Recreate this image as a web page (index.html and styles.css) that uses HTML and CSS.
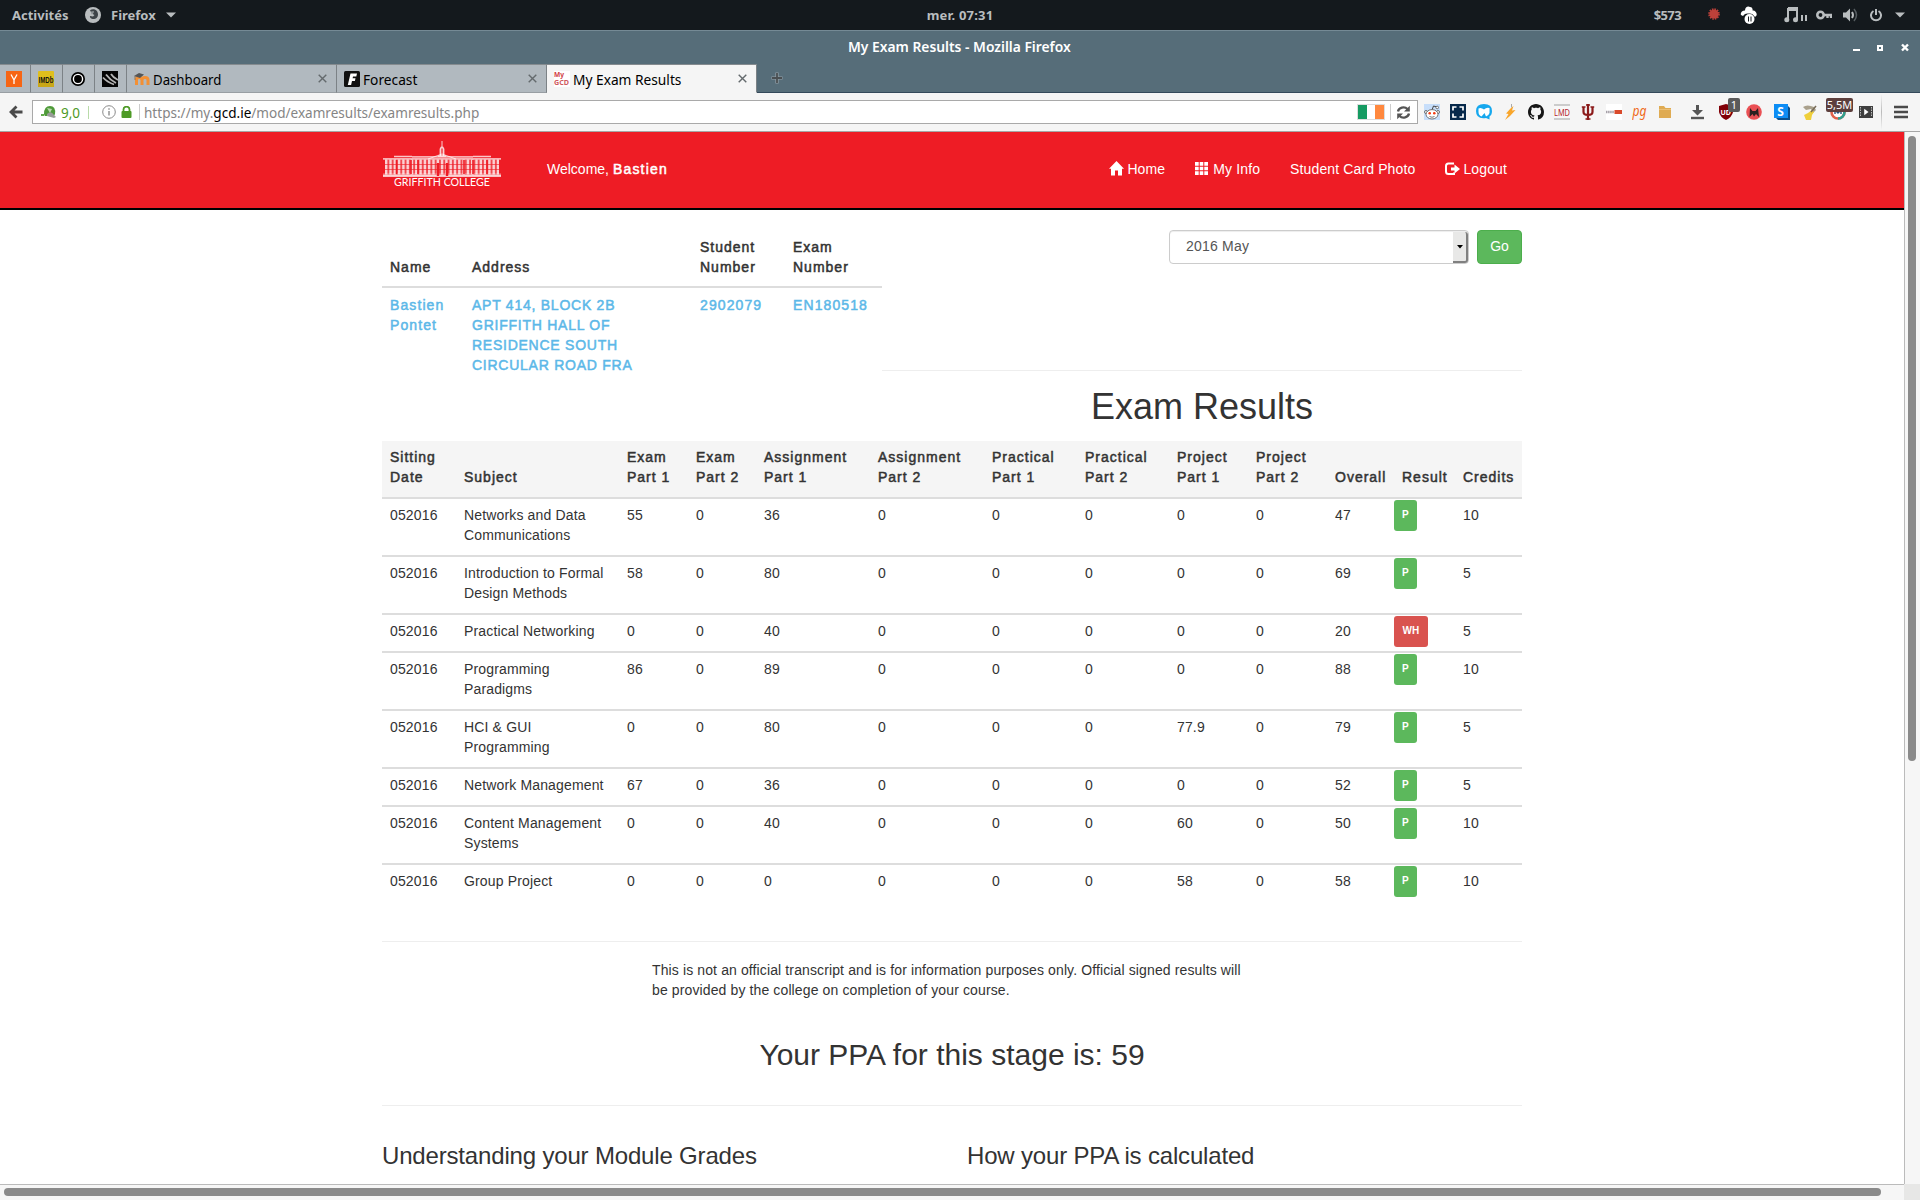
FILE: index.html
```html
<!DOCTYPE html>
<html lang="en">
<head>
<meta charset="utf-8">
<title>My Exam Results</title>
<link rel="stylesheet" href="styles.css">
</head>
<body>
<div class="desktop">
  <div class="panel">
    <div class="panel-left">
      <span class="activities">Activités</span>
      <svg class="fx" width="16" height="16" viewBox="0 0 16 16"><circle cx="8" cy="8" r="8" fill="#b9bdbf"/><path d="M5 3.200C8 1 13 2.500 13 7.500C13 11 10 12.500 7.500 12C5.500 11.500 4.500 10 5 9L8 9.500L9.500 8L7.500 7L8.500 5.500L6 5Z" fill="#3d4348"/><path d="M6 4.500L9 4L8.500 6L6.500 7.500Z" fill="#8b9194"/></svg>
      <span>Firefox</span>
      <svg class="caret" width="10" height="6" viewBox="0 0 10 6"><path d="M0 0.500H10L5 5.500Z" fill="#b9bdbf"/></svg>
    </div>
    <div class="clock">mer. 07:31</div>
    <div class="panel-right">
      <span class="money">$573</span>
      <svg class="i-badge" width="12" height="12" viewBox="0 0 12 12"><circle cx="6" cy="6" r="4.600" fill="#bd413a"/><circle cx="6" cy="6" r="5" fill="none" stroke="#bd413a" stroke-width="1.600" stroke-dasharray="1.600 1"/></svg>
      <svg class="i-mush" width="17" height="18" viewBox="0 0 17 18"><path d="M1 9C0 7 2 4.500 5 4.500C5 1 8-.5 10 1C12 1 13 3 12.500 4.500C15 4 17.500 7 16.500 9.500L15 11C13 8 11 7 9 7.500C5.500 7 4 8.500 3 10Z" fill="#fff"/><circle cx="9.500" cy="13" r="5" fill="#fff"/><path d="M8.500 10.500V15.500M11 10.500V15.500" stroke="#14191d"/></svg>
      <svg class="i-music" width="23" height="16" viewBox="0 0 23 16"><path d="M4 1H13V13M4 1V13" fill="none" stroke="#b9bdbf" stroke-width="2"/><path d="M4 2H13" stroke="#b9bdbf" stroke-width="4"/><circle cx="2.800" cy="12.800" r="2.500" fill="#b9bdbf"/><circle cx="11.500" cy="12.800" r="2.500" fill="#b9bdbf"/><path d="M18 8V14M22 8V14" stroke="#b9bdbf" stroke-width="2"/></svg>
      <svg class="i-key" width="16" height="12" viewBox="0 0 16 12"><circle cx="4.500" cy="6" r="3.200" fill="none" stroke="#b9bdbf" stroke-width="2.600"/><path d="M8 6H15V9M11.500 6V9" fill="none" stroke="#b9bdbf" stroke-width="2.400"/></svg>
      <svg class="i-vol" width="15" height="14" viewBox="0 0 15 14"><path d="M0 4.500H3L7 0.500V13.500L3 9.500H0Z" fill="#b9bdbf"/><path d="M9 4Q11 7 9 10" fill="none" stroke="#b9bdbf" stroke-width="2"/><path d="M11 1Q16 7 11 13" fill="none" stroke="#555c60" stroke-width="1.500"/></svg>
      <svg class="i-power" width="12" height="14" viewBox="0 0 12 14"><path d="M3.500 3A5 5 0 1 0 8.500 3M6 1V7" fill="none" stroke="#b9bdbf" stroke-width="2"/></svg>
      <svg class="i-down" width="10" height="6" viewBox="0 0 10 6"><path d="M0 0.500H10L5 5.500Z" fill="#b9bdbf"/></svg>
    </div>
  </div>

  <div class="titlebar">
    <div class="win-title">My Exam Results - Mozilla Firefox</div>
    <svg class="win-buttons" width="58" height="10" viewBox="0 0 58 10" shape-rendering="crispEdges"><path d="M1 6H8V8H1Z" fill="#fff"/><path d="M26 2.500H30V6.500H26Z" fill="none" stroke="#fff" stroke-width="2"/><path d="M50 1.500L56 7.500M56 1.500L50 7.500" stroke="#fff" stroke-width="2.400" shape-rendering="auto"/></svg>
  </div>

  <div class="tabs">
    <div class="tab pinned"><svg width="16" height="16" viewBox="0 0 16 16"><rect width="16" height="16" fill="#f76514"/><path d="M5 3.500L8 9L11 3.500M8 8.500V13" fill="none" stroke="#fff" stroke-width="1.300"/></svg></div>
    <div class="tab pinned"><svg width="16" height="16" viewBox="0 0 16 16"><rect width="16" height="16" rx="1" fill="#e0bf1c"/><rect y="12" width="16" height="4" fill="#c9a717"/><text x="0.500" y="12" textLength="15" lengthAdjust="spacingAndGlyphs" class="imdb">IMDb</text></svg></div>
    <div class="tab pinned"><svg width="16" height="16" viewBox="0 0 16 16"><circle cx="8" cy="8" r="7" fill="#000"/><circle cx="8" cy="8" r="4.600" fill="#000" stroke="#fff" stroke-width="1.400"/></svg></div>
    <div class="tab pinned"><svg width="16" height="16" viewBox="0 0 16 16"><rect width="16" height="16" fill="#050505"/><path d="M1 6.500Q5 11 12 13.500M4 3.500Q8 9 14 12M9 3Q11 6.500 16 9" fill="none" stroke="#b5b5b5" stroke-width="1.800"/></svg></div>
    <div class="tab"><svg width="16" height="16" viewBox="0 0 16 16"><path d="M2.500 14V9Q2.500 6.500 5 6.500T8 9V14M8 9Q8 6.500 11 6.500T14 9V14" fill="none" stroke="#f39034" stroke-width="3"/><path d="M0 5L5 2L10 3.500L6 7Z" fill="#555"/><path d="M1 5V9" stroke="#8a6440" stroke-width=".8"/></svg><span class="tab-label">Dashboard</span><svg class="close" width="9" height="9" viewBox="0 0 9 9"><path d="M.7.7L8.300 8.300M8.300.7L.7 8.300" stroke="#646a6d" stroke-width="1.400"/></svg></div>
    <div class="tab"><svg width="16" height="16" viewBox="0 0 16 16"><rect width="16" height="16" rx="1.500" fill="#111"/><path d="M6.500 2.500H13L12.300 5.500H9L8.600 7.300H11.500L10.900 10H8L7.100 14H3.800Z" fill="#fff"/></svg><span class="tab-label wide">Forecast</span><svg class="close" width="9" height="9" viewBox="0 0 9 9"><path d="M.7.7L8.300 8.300M8.300.7L.7 8.300" stroke="#646a6d" stroke-width="1.400"/></svg></div>
    <div class="tab active"><svg width="16" height="16" viewBox="0 0 16 16"><rect width="16" height="16" fill="#fff"/><text x="0" y="6" textLength="10" lengthAdjust="spacingAndGlyphs" class="fav-my">My</text><text x="0" y="14" textLength="15" lengthAdjust="spacingAndGlyphs" class="fav-gcd">GCD</text></svg><span class="tab-label wide">My Exam Results</span><svg class="close" width="9" height="9" viewBox="0 0 9 9"><path d="M.7.7L8.300 8.300M8.300.7L.7 8.300" stroke="#646a6d" stroke-width="1.400"/></svg></div>
    <svg class="newtab" width="12" height="12" viewBox="0 0 12 12"><path d="M6 .5V11.500M.5 6H11.500" stroke="#93a0a7" stroke-width="3.200"/><path d="M6 1V11M1 6H11" stroke="#4a4f52" stroke-width="1.800"/></svg>
  </div>

  <div class="toolbar">
    <svg class="back" width="14" height="14" viewBox="0 0 14 14"><path d="M7.500 1.500L2 7L7.500 12.500M2.500 7H13.500" fill="none" stroke="#4a4a4a" stroke-width="2.800"/></svg>
    <div class="urlbar">
      <svg class="wot" width="16" height="14" viewBox="0 0 16 14"><path d="M3 9Q3 1 9 1T14 9L13 11H4Z" fill="#4f9a39"/><path d="M6 3L11 4L9 8Z" fill="#b9dcae"/><path d="M0 9H4L3 11H0Z" fill="#62ab4b"/><path d="M6 9Q10 5 13 10L15 12L13 13L6 11Z" fill="#999b98"/></svg>
      <span class="score">9,0</span>
      <i class="sep green"></i>
      <svg class="info" width="14" height="14" viewBox="0 0 14 14"><circle cx="7" cy="7" r="6.300" fill="none" stroke="#8b8b8b"/><path d="M7 6V10.500M7 3.300V4.800" stroke="#8b8b8b" stroke-width="1.400"/></svg>
      <svg class="lock" width="11" height="12" viewBox="0 0 11 12"><rect x=".5" y="5" width="10" height="7" rx="1" fill="#4d9a26"/><path d="M2.500 6V3.500A3 2.800 0 0 1 8.500 3.500V6" fill="none" stroke="#4d9a26" stroke-width="1.800"/></svg>
      <i class="sep"></i>
      <span class="url">https://my.<b>gcd.ie</b>/mod/examresults/examresults.php</span>
      <svg class="flag" width="28" height="16" viewBox="0 0 28 16"><rect x=".5" y=".5" width="27" height="15" fill="#fff" stroke="#ddd"/><rect x="1" y="1" width="9" height="14" fill="#169b62"/><rect x="18" y="1" width="9" height="14" fill="#ff883e"/></svg>
      <i class="sep tall"></i>
      <svg class="reload" width="15" height="15" viewBox="0 0 15 15"><path d="M2 6.500A5.500 4.800 0 0 1 11.500 4M13 8.500A5.500 4.800 0 0 1 3.500 11" fill="none" stroke="#555" stroke-width="2.300"/><path d="M13.800.8V6.500H8Z" fill="#555"/><path d="M1.200 14.200V8.500H7Z" fill="#555"/></svg>
    </div>
    <div class="bookmarks">
      <svg viewBox="0 0 16 16"><rect width="16" height="16" fill="#c7defa"/><path d="M8 6L9.500 2L13 3" fill="none" stroke="#444"/><circle cx="13.200" cy="3.500" r="1.300" fill="#fff" stroke="#555" stroke-width=".8"/><circle cx="2" cy="8" r="1.500" fill="#fff" stroke="#555" stroke-width=".8"/><circle cx="14" cy="8" r="1.500" fill="#fff" stroke="#555" stroke-width=".8"/><ellipse cx="8" cy="10.300" rx="6" ry="4.700" fill="#fff" stroke="#555" stroke-width=".8"/><circle cx="5.700" cy="9.300" r="1.300" fill="#f33b12"/><circle cx="10.300" cy="9.300" r="1.300" fill="#f33b12"/><path d="M5.500 12.500Q8 14 10.500 12.500" fill="none" stroke="#555" stroke-width=".8"/></svg>
      <svg viewBox="0 0 16 16"><rect width="16" height="16" fill="#07294b"/><path d="M6.500 3H3V6.500M9.500 3H13V6.500M6.500 13H3V9.500M9.500 13H13V9.500" fill="none" stroke="#fff" stroke-width="1.700"/></svg>
      <svg viewBox="0 0 16 16"><path d="M8 0Q16 0 16 7Q16 11 13.500 12.500V15.500L10 14Q0 15.500 0 7Q0 0 8 0Z" fill="#16a8ee"/><path d="M2.500 4.500Q5 3 8 5.500Q10.500 3 13.500 4V9Q12.500 12 10 12.500L8.500 9L5.500 12.500Q2.500 11 2.500 8Z" fill="#fff"/></svg>
      <svg viewBox="0 0 16 16"><path d="M9 4L11.500 2L10 6.500L13.500 6L8 12L3 16L6.500 10L4 9.500Z" fill="#f9a62b"/><path d="M9.500 0V3.500" stroke="#aaa"/></svg>
      <svg viewBox="0 0 16 16"><path fill="#161616" fill-rule="evenodd" d="M8 0C3.580 0 0 3.580 0 8c0 3.540 2.290 6.530 5.470 7.590.4.070.55-.17.55-.38 0-.19-.01-.82-.01-1.490-2.010.37-2.530-.49-2.690-.94-.09-.23-.48-.94-.82-1.130-.28-.15-.68-.52-.01-.53.63-.01 1.080.58 1.230.82.72 1.210 1.870.87 2.330.66.07-.52.28-.87.51-1.070-1.780-.2-3.640-.89-3.640-3.950 0-.87.31-1.590.82-2.150-.08-.2-.36-1.020.08-2.120 0 0 .67-.21 2.200.82.64-.18 1.320-.27 2-.27s1.360.09 2 .27c1.530-1.040 2.200-.82 2.200-.82.44 1.100.16 1.920.08 2.120.51.56.82 1.270.82 2.150 0 3.070-1.870 3.750-3.650 3.950.29.25.54.73.54 1.480 0 1.070-.01 1.930-.01 2.200 0 .21.15.46.55.38A8 8 0 0 0 16 8c0-4.420-3.580-8-8-8z"/></svg>
      <svg viewBox="0 0 16 16"><rect width="16" height="16" fill="#f8f8f8"/><path d="M0 1H16M0 15H16" stroke="#ccc" stroke-width="2"/><text x="0" y="11.500" textLength="16" lengthAdjust="spacingAndGlyphs" class="lmd">LMD</text></svg>
      <svg viewBox="0 0 16 16"><path d="M8 0V16M3.500 3V8Q3.500 11 8 11T12.500 8V3" fill="none" stroke="#8b1a1a" stroke-width="2.200"/><path d="M1.800 3H5.500M10.500 3H14.200M6 1H10M5.500 15H10.500" stroke="#8b1a1a" stroke-width="1.600"/></svg>
      <svg viewBox="0 0 16 16"><rect width="16" height="16" fill="#fff"/><path d="M0 8H8" stroke="#a6a0a8" stroke-width="2.600" stroke-dasharray="1.500 .6"/><rect x="8.500" y="6" width="7.500" height="4" fill="#d94a2b"/></svg>
      <svg viewBox="0 0 16 16"><text x="0.500" y="12" textLength="14" lengthAdjust="spacingAndGlyphs" class="pg">pg</text></svg>
      <svg viewBox="0 0 16 16"><path d="M1 2H6L7.500 4H13V14H1Z" fill="#dfab53"/><path d="M1 5.500H13" stroke="#edc47e" stroke-width=".8"/></svg>
    </div>
    <div class="addons">
      <svg viewBox="0 0 16 16"><path d="M6 1H9V6H13L7.500 11.500L2 6H6Z" fill="#555"/><path d="M1 14H14" stroke="#555" stroke-width="2.400"/></svg>
      <span class="addon"><svg viewBox="0 0 16 16"><path d="M8 0L15 2V8Q14 13 8 16Q2 13 1 8V2Z" fill="#800007"/><text x="2.500" y="11" class="ub">UD</text></svg><em class="count grey">1</em></span>
      <svg viewBox="0 0 16 16"><circle cx="8" cy="8" r="7.800" fill="#ea5054"/><path d="M3.500 13L4 4L6.500 7H9.500L12 4L13 13L10 10L8 12.500L6.500 10Z" fill="#2b2020"/></svg>
      <svg viewBox="0 0 16 16"><path d="M2 2H14L16 4V16H4L2 14Z" fill="#0a4f8c"/><rect width="14" height="14" fill="#0d8df5"/><text x="3.200" y="11.500" class="s">S</text></svg>
      <svg viewBox="0 0 16 16"><path d="M1 3Q5 0 12 3L14 6L11 9L9 5L4 6Z" fill="#aaa18d"/><path d="M10 6L6 9L2 11L4 16H9L10 11L12 8Z" fill="#efcf3b"/><path d="M14 2L9 8" stroke="#776b58" stroke-width="1.500"/></svg>
      <span class="addon"><svg viewBox="0 0 16 16"><circle cx="8" cy="8" r="6.500" fill="#fff" stroke="#e0614b" stroke-width="2.600"/><path d="M8 14.500A6.500 6.500 0 0 0 14.500 8" fill="none" stroke="#2f9f8e" stroke-width="2.600"/><path d="M5 10V6L8 9L11 6V10" fill="none" stroke="#26517b" stroke-width="1.400"/></svg><em class="count brown">5,5M</em></span>
      <svg viewBox="0 0 16 16"><rect x="1" y="2" width="14" height="12" fill="#3f3f3f"/><path d="M2.500 3V13M13.500 3V13" stroke="#bbb" stroke-width="1" stroke-dasharray="1.500 1"/><path d="M6.200 4.800L10.500 8L6.200 11.200Z" fill="#fff"/></svg>
    </div>
    <i class="menu-sep"></i>
    <svg class="menu" width="14" height="14" viewBox="0 0 14 14"><path d="M0 2H14M0 7H14M0 12H14" stroke="#4a4a4a" stroke-width="2.600"/></svg>
  </div>

  <div class="viewport">
    <div class="page">
      <header class="site-header">
        <div class="container header-row">
          <svg class="logo" width="120" height="48" viewBox="0 0 120 48">
            <g fill="none" stroke="#fff">
              <path d="M60 0V5" stroke-width=".8"/><path d="M58.500 15V8Q60 4 61.500 8V15" stroke-width="1.800" opacity=".8"/>
              <path d="M56 15H64M12 15.500H30M91 15.500H109" opacity=".75" stroke-width="1.400"/>
              <path d="M46 18L60 13L74 18" opacity=".7"/>
              <path d="M1 17.800H119M1 35H119M30 15.800H91" opacity=".65" stroke-width="1.800"/>
              <path d="M3 26H117" stroke-width="15" stroke-dasharray="2.400 1.900" opacity=".75"/>
              <path d="M3 26H117" stroke-width="15" opacity=".2"/>
              <path d="M1 34H119" stroke-width="3" opacity=".45"/>
            </g>
            <g stroke="#ee1c25"><path d="M2 23.500H118M2 28.500H118" stroke-width="1" opacity=".6"/><path d="M14.500 19V33M29 19V33M36 19V33M82 19V33M91 19V33M105 19V33" stroke-width="1.600"/><path d="M56 22V35M65 22V35" stroke-width="2.400"/></g>
            <text x="12" y="45" textLength="96" lengthAdjust="spacingAndGlyphs" class="logo-text">GRIFFITH COLLEGE</text>
          </svg>
          <div class="welcome">Welcome, <b>Bastien</b></div>
          <nav class="nav">
            <a class="tight"><svg width="15" height="15" viewBox="0 0 15 15"><path d="M7.500 0L15 7.700H13V14.500H9V9.500H6V14.500H2V7.700H0Z" fill="#fff"/></svg>Home</a>
            <a class="info-link"><svg width="13" height="13" viewBox="0 0 13 13"><path d="M0 0H3.700V3.700H0ZM4.700 0H8.300V3.700H4.700ZM9.300 0H13V3.700H9.300ZM0 4.700H3.700V8.300H0ZM4.700 4.700H8.300V8.300H4.700ZM9.300 4.700H13V8.300H9.300ZM0 9.300H3.700V13H0ZM4.700 9.300H8.300V13H4.700ZM9.300 9.300H13V13H9.300Z" fill="#fff"/></svg>My Info</a>
            <a>Student Card Photo</a>
            <a class="tight"><svg width="15" height="14" viewBox="0 0 15 14"><path d="M9 1.500H3.500Q1 1.500 1 4V9.500Q1 12 3.500 12H9V10.500" fill="none" stroke="#fff" stroke-width="2"/><path d="M9.500 2.500L15 7L9.500 11.500V8.500H6V5.500H9.500Z" fill="#fff"/></svg>Logout</a>
          </nav>
        </div>
      </header>

      <main class="container">
        <section class="summary">
          <table class="student">
            <colgroup><col style="width:82px"><col style="width:228px"><col style="width:93px"><col style="width:97px"></colgroup>
            <thead><tr><th>Name</th><th>Address</th><th>Student<br>Number</th><th>Exam<br>Number</th></tr></thead>
            <tbody><tr><td>Bastien<br>Pontet</td><td class="address">APT 414, BLOCK 2B<br>GRIFFITH HALL OF<br>RESIDENCE SOUTH<br>CIRCULAR ROAD FRA</td><td>2902079</td><td>EN180518</td></tr></tbody>
          </table>
          <div class="chooser">
            <form class="picker">
              <div class="select"><span>2016 May</span><i class="select-arrow"><svg width="6" height="4" viewBox="0 0 6 4"><path d="M0 0H6L3 3.500Z" fill="#000"/></svg></i></div>
              <button type="button" class="go">Go</button>
            </form>
            <h1>Exam Results</h1>
          </div>
        </section>

        <table class="results">
          <colgroup><col style="width:74px"><col style="width:163px"><col style="width:69px"><col style="width:68px"><col style="width:114px"><col style="width:114px"><col style="width:93px"><col style="width:92px"><col style="width:79px"><col style="width:79px"><col style="width:67px"><col style="width:61px"><col style="width:67px"></colgroup>
          <thead><tr><th>Sitting<br>Date</th><th>Subject</th><th>Exam<br>Part 1</th><th>Exam<br>Part 2</th><th>Assignment<br>Part 1</th><th>Assignment<br>Part 2</th><th>Practical<br>Part 1</th><th>Practical<br>Part 2</th><th>Project<br>Part 1</th><th>Project<br>Part 2</th><th>Overall</th><th>Result</th><th>Credits</th></tr></thead>
          <tbody>
            <tr><td>052016</td><td>Networks and Data<br>Communications</td><td>55</td><td>0</td><td>36</td><td>0</td><td>0</td><td>0</td><td>0</td><td>0</td><td>47</td><td class="res"><span class="label pass">P</span></td><td>10</td></tr>
            <tr><td>052016</td><td>Introduction to Formal<br>Design Methods</td><td>58</td><td>0</td><td>80</td><td>0</td><td>0</td><td>0</td><td>0</td><td>0</td><td>69</td><td class="res"><span class="label pass">P</span></td><td>5</td></tr>
            <tr><td>052016</td><td>Practical Networking</td><td>0</td><td>0</td><td>40</td><td>0</td><td>0</td><td>0</td><td>0</td><td>0</td><td>20</td><td class="res"><span class="label held">WH</span></td><td>5</td></tr>
            <tr><td>052016</td><td>Programming<br>Paradigms</td><td>86</td><td>0</td><td>89</td><td>0</td><td>0</td><td>0</td><td>0</td><td>0</td><td>88</td><td class="res"><span class="label pass">P</span></td><td>10</td></tr>
            <tr><td>052016</td><td>HCI &amp; GUI<br>Programming</td><td>0</td><td>0</td><td>80</td><td>0</td><td>0</td><td>0</td><td>77.9</td><td>0</td><td>79</td><td class="res"><span class="label pass">P</span></td><td>5</td></tr>
            <tr><td>052016</td><td>Network Management</td><td>67</td><td>0</td><td>36</td><td>0</td><td>0</td><td>0</td><td>0</td><td>0</td><td>52</td><td class="res"><span class="label pass">P</span></td><td>5</td></tr>
            <tr><td>052016</td><td>Content Management<br>Systems</td><td>0</td><td>0</td><td>40</td><td>0</td><td>0</td><td>0</td><td>60</td><td>0</td><td>50</td><td class="res"><span class="label pass">P</span></td><td>10</td></tr>
            <tr><td>052016</td><td>Group Project</td><td>0</td><td>0</td><td>0</td><td>0</td><td>0</td><td>0</td><td>58</td><td>0</td><td>58</td><td class="res"><span class="label pass">P</span></td><td>10</td></tr>
          </tbody>
        </table>

        <section class="notice">
          <p>This is not an official transcript and is for information purposes only. Official signed results will<br>be provided by the college on completion of your course.</p>
          <h2>Your PPA for this stage is: 59</h2>
        </section>

        <section class="explain">
          <h3>Understanding your Module Grades</h3>
          <h3>How your PPA is calculated</h3>
        </section>
      </main>
    </div>
    <div class="vbar"><i></i></div>
    <div class="hbar"><i></i></div>
    <div class="corner"></div>
  </div>
</div>
</body>
</html>
```

FILE: styles.css
```css
* { box-sizing: border-box; }
body { margin: 0; overflow: hidden; }
svg { display: block; flex: none; }
h1, h2, h3, p { margin: 0; font-weight: 400; }

.desktop {
  width: 1920px; height: 1200px;
  display: flex; flex-direction: column;
  font-family: "Noto Sans", "Open Sans", sans-serif;
}

/* GNOME panel */
.panel {
  height: 30px; flex: none;
  display: grid; grid-template-columns: 1fr auto 1fr; align-items: center;
  background: #14191d; color: #b9bdbf;
  font-size: 13px; font-weight: 700; line-height: 30px;
}
.panel-left { display: flex; align-items: center; padding-left: 12px; }
.activities { width: 73px; }
.fx { margin-right: 10px; }
.caret { margin-left: 10px; }
.clock { letter-spacing: .2px; }
.panel-right { display: flex; align-items: center; justify-content: flex-end; padding-right: 15px; }
.money { letter-spacing: -.6px; }
.i-badge { margin: 0 20px 3px 27px; }
.i-music { margin: 0 9px 0 27px; }
.i-vol { margin: 0 12px 0 11px; }
.i-down { margin-left: 13px; }

/* window title */
.titlebar {
  height: 34px; flex: none;
  display: grid; grid-template-columns: 1fr 224px 1fr; align-items: center;
  background: #566d79; border-top: 1px solid #758a95;
  color: #fff;
}
.win-title {
  grid-column: 2; white-space: nowrap;
  font-size: 15px; font-weight: 600; line-height: 20px; padding-bottom: 4px;
  transform: scaleX(.922); transform-origin: 0 50%;
}
.win-buttons { justify-self: end; margin-right: 10px; }

/* tab strip */
.tabs {
  height: 29px; flex: none; display: flex;
  background: #566d79; box-shadow: inset 0 -1px #34495a;
}
.tab {
  width: 210px; display: flex; align-items: center;
  background: #b1b9bf; border-top: 1px solid #858b8f; border-right: 1px solid #7c8286; border-bottom: 1px solid #989ea3;
  padding-left: 7px;
  font-size: 15px; color: #000;
}
.tab.pinned { width: 32px; }
.tab.pinned:first-child { width: 31px; padding-left: 6px; }
.tab.active { background: #f5f5f5; border-bottom-color: #f5f5f5; }
.tab-label {
  width: 161px; margin-left: 3px; white-space: nowrap; line-height: 20px;
  transform: scaleX(.88); transform-origin: 0 50%;
}
.tab-label.wide { transform: scaleX(.915); }
.close { margin-left: 4px; }
.newtab { margin: 8px 0 0 14px; }
.imdb { font: 700 9px "Liberation Sans", sans-serif; fill: #111; }
.fav-my { font: 700 7.500px "Noto Sans", sans-serif; fill: #cf3a42; }
.fav-gcd { font: 700 7px "Noto Sans", sans-serif; fill: #cf5a60; }

/* navigation toolbar */
.toolbar {
  height: 39px; flex: none; display: flex; align-items: center;
  background: #f5f5f5; border-bottom: 1px solid #a6a6a6;
}
.back { margin: 0 9px; }
.urlbar {
  width: 1386px; height: 24px; display: flex; align-items: center;
  background: #fff; border: 1px solid #a9a9a9; font-size: 15px; line-height: 20px;
}
.wot { margin-left: 8px; }
.score { width: 27px; margin-left: 4px; color: #4d9a26; transform: scaleX(.9); transform-origin: 0 50%; }
.sep { width: 1px; height: 16px; background: #ccc; }
.sep.green { height: 13px; background: #b9dba9; }
.info { margin: 0 5px 0 13px; }
.lock { margin-right: 7px; }
.url {
  width: 1213px; margin-left: 4px; color: #858585; white-space: nowrap;
  transform: scaleX(.903); transform-origin: 0 50%;
}
.url b { font-weight: 400; color: #000; }
.flag { margin-right: 5px; }
.sep.tall { margin-right: 5px; }
.bookmarks { display: flex; gap: 10px; margin-left: 6px; }
.bookmarks svg, .addons svg { width: 16px; height: 16px; }
.lmd { font: 9px "Noto Sans", sans-serif; fill: #b21d2c; }
.pg { font: italic 14px "Noto Sans", sans-serif; fill: #ef6a1a; }
.addons { display: flex; gap: 12px; margin-left: 16px; }
.addon { position: relative; }
.ub { font: 700 7px "Noto Sans", sans-serif; fill: #fff; }
.s { font: 700 12px "Noto Sans", sans-serif; fill: #fff; }
.count {
  position: absolute; top: -6px; height: 14px; border-radius: 2px;
  font-style: normal; font-size: 11px; line-height: 14px; text-align: center; color: #fff;
}
.count.grey { left: 10px; width: 12px; background: #5a5a5a; }
.count.brown { left: -4px; width: 27px; background: #5d3f3d; }
.menu-sep { width: 1px; height: 36px; margin: 0 12px 0 7px; background: linear-gradient(transparent, #bbb, transparent); }

/* page viewport with its scrollbars */
.viewport {
  flex: 1; min-height: 0;
  display: grid; grid-template: 1052px 16px / 1904px 16px;
}
.page {
  overflow: hidden; background: #fff; color: #333;
  font: 14px/20px "Liberation Sans", Arial, sans-serif;
}
.vbar { border-left: 1px solid #bbb; background: #f6f6f6; padding: 4px 3px; }
.vbar i { display: block; width: 8px; height: 625px; border-radius: 4px; background: #8a8a8a; }
.hbar { border-top: 1px solid #bbb; background: #f6f6f6; padding: 3px 4px; }
.hbar i { display: block; width: 1877px; height: 8px; border-radius: 4px; background: #8a8a8a; }
.corner { background: #e7e7e6; }

.container { width: 1140px; margin: 0 auto; }

/* site header */
.site-header { height: 78px; background: #ee1c25; border-bottom: 2px solid #000; color: #fff; }
.header-row { display: flex; align-items: flex-start; }
.logo { margin-top: 9px; }
.logo-text { font: 10.500px Lato, sans-serif; fill: #fff; }
.welcome { margin: 27px 0 0 45px; }
.welcome b { font-weight: 400; letter-spacing: 1.2px; -webkit-text-stroke: .5px currentColor; }
.nav { display: flex; gap: 30px; margin: 27px 15px 0 auto; letter-spacing: .13px; }
.nav a { display: flex; align-items: center; gap: 5px; }
.nav .tight { gap: 3px; }
.nav svg { margin-bottom: 1px; }

/* student + sitting selection */
.summary { height: 231px; display: flex; }
table { border-collapse: separate; border-spacing: 0; table-layout: fixed; }
th, td { padding: 7px 8px 9px; text-align: left; vertical-align: top; white-space: nowrap; }
th {
  vertical-align: bottom; font-weight: 400; letter-spacing: 1px;
  -webkit-text-stroke: .5px currentColor; border-bottom: 2px solid #ddd;
}
.student { width: 500px; height: 0; margin-top: 20px; }
.student td { color: #5cb8e8; letter-spacing: 1.1px; -webkit-text-stroke: .5px currentColor; }
.student .address { letter-spacing: .75px; }
.chooser { flex: 1; }
.picker {
  height: 161px; display: flex; justify-content: flex-end; align-items: flex-start; gap: 8px;
  padding-top: 20px; border-bottom: 1px solid #eee;
}
.select {
  width: 300px; height: 34px; display: flex; justify-content: space-between;
  padding-left: 16px; border: 1px solid #ccc; border-radius: 4px;
  color: #555; line-height: 31px; letter-spacing: .2px;
  box-shadow: inset 0 1px 1px rgba(0, 0, 0, .075);
}
.select-arrow {
  width: 15px; display: flex; align-items: center; justify-content: center;
  margin-top: 1px; background: #e8e8e7;
  border-right: 2px solid #808080; border-bottom: 2px solid #808080; border-radius: 0 3px 3px 0;
}
.go {
  width: 45px; height: 34px; padding: 0 0 2px; border: 1px solid #4cae4c; border-radius: 4px;
  background: #5cb85c; color: #fff; font: inherit;
}
h1 { margin-top: 16px; text-align: center; font-size: 36px; line-height: 40px; }

/* results */
.results { width: 1140px; }
.results th, .results td { padding: 6px 8px 10px; }
.results thead th { background: #f5f5f5; }
.results td { height: 38px; border-bottom: 2px solid #ddd; letter-spacing: .15px; }
.results tr:last-child td { border-bottom-color: transparent; }
.results td.res { padding: 1px 0 0; }
.label {
  display: block; height: 31px; border-radius: 3px;
  color: #fff; font-size: 10px; font-weight: 700; line-height: 29px; text-align: center;
}
.pass { width: 23px; background: #5cb85c; }
.held { width: 34px; background: #d9534f; }

.notice { height: 164px; margin-top: 38px; border-top: 1px solid #eee; padding-top: 18px; }
.notice p { margin-left: 270px; letter-spacing: .12px; }
.notice h2 { margin-top: 38px; text-align: center; font-size: 30px; line-height: 33px; }
.explain { display: flex; padding-top: 37px; border-top: 1px solid #eee; }
.explain h3 { flex: none; width: 585px; font-size: 24px; line-height: 26px; letter-spacing: -.17px; }
```
